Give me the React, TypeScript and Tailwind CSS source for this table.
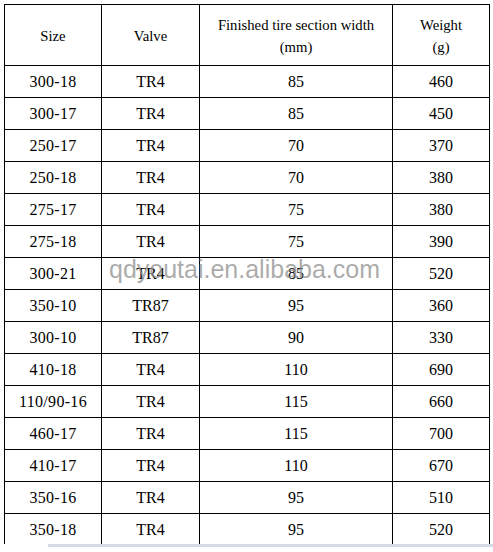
const rows: [string, string, string, string][] = [
  ['300-18', 'TR4', '85', '460'],
  ['300-17', 'TR4', '85', '450'],
  ['250-17', 'TR4', '70', '370'],
  ['250-18', 'TR4', '70', '380'],
  ['275-17', 'TR4', '75', '380'],
  ['275-18', 'TR4', '75', '390'],
  ['300-21', 'TR4', '85', '520'],
  ['350-10', 'TR87', '95', '360'],
  ['300-10', 'TR87', '90', '330'],
  ['410-18', 'TR4', '110', '690'],
  ['110/90-16', 'TR4', '115', '660'],
  ['460-17', 'TR4', '115', '700'],
  ['410-17', 'TR4', '110', '670'],
  ['350-16', 'TR4', '95', '510'],
  ['350-18', 'TR4', '95', '520'],
]

const cols = 'grid grid-cols-[97px_98px_193px_97px]'
const cell = 'flex items-center justify-center border-r border-b border-black text-center'

export default function App() {
  return (
    <div
      className="relative w-[493px] h-[552px] overflow-hidden bg-white text-black"
      style={{ fontFamily: '"Liberation Serif", "Times New Roman", serif' }}
    >
      <div className="h-[544px] overflow-hidden pt-[4px] pl-[4px]">
        <div className="w-[486px] border-l border-t border-black">
          {/* header */}
          <div className={`${cols} h-[61px] text-[14.7px] leading-[22px]`}>
            <div className={`${cell} pt-[2px]`}>Size</div>
            <div className={`${cell} pt-[2px]`}>Valve</div>
            <div className={`${cell} pt-[2px]`}>
              Finished tire section width
              <br />
              (mm)
            </div>
            <div className={`${cell} pt-[2px]`}>
              Weight
              <br />
              (g)
            </div>
          </div>

          {rows.map((r) => (
            <div key={r[0]} className={`${cols} h-[32px] text-[16px]`}>
              <div className={`${cell} tracking-[0.3px]`}>{r[0]}</div>
              <div className={cell}>{r[1]}</div>
              <div className={cell}>{r[2]}</div>
              <div className={cell}>{r[3]}</div>
            </div>
          ))}
        </div>
      </div>

      <div className="ml-[48px] h-[3px] bg-[#d3dce5]" />

      {/* watermark */}
      <div
        className="absolute left-[109px] top-[257px] text-[25px] leading-[25px] text-[#8f8f8f]/75 whitespace-nowrap"
        style={{ fontFamily: '"Liberation Sans", Arial, sans-serif' }}
      >
        qdyoutai.en.alibaba.com
      </div>
    </div>
  )
}
